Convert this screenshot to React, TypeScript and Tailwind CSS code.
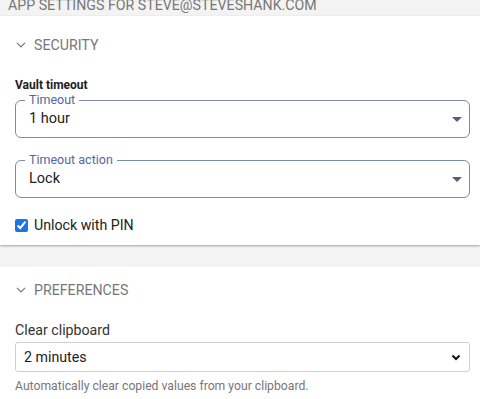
import React from "react";

function Chevron() {
  return (
    <svg width="10" height="6" viewBox="0 0 10 6" className="shrink-0">
      <path d="M1 0.8 L5 4.8 L9 0.8" fill="none" stroke="#777" strokeWidth="1.2" />
    </svg>
  );
}

function Caret() {
  return (
    <svg width="10" height="5" viewBox="0 0 10 5" className="shrink-0">
      <path d="M0 0 L10 0 L5 5 Z" fill="#55607f" />
    </svg>
  );
}

function OutlinedSelect({ label, value }: { label: string; value: string }) {
  return (
    <fieldset className="border border-[#7b89b0] rounded-[6px] pl-[9px] pr-[7px] pb-[8px]">
      <legend className="px-[4px] text-[12.5px] leading-[14px] text-[#5566a0]">{label}</legend>
      <div className="flex items-center justify-between pt-[2px] pl-[4px]">
        <span className="text-[14.5px] leading-[20px] text-[#212121]">{value}</span>
        <Caret />
      </div>
    </fieldset>
  );
}

export default function App() {
  return (
    <div className="w-[480px] h-[399px] overflow-hidden bg-[#f3f3f3] font-['Roboto',sans-serif]">
      <div className="h-[18px] pl-[8px] -mt-[2px] text-[14.2px] leading-[14px] text-[#777] uppercase whitespace-nowrap">
        App settings for steve@steveshank.com
      </div>
      <div className="bg-white shadow-[0_1px_2px_rgba(0,0,0,0.35)] pl-[15px] pr-[10px] pb-[10px]">
        <div className="flex items-center gap-[8px] pl-[1px] pt-[21px] pb-[23px]">
          <Chevron />
          <span className="text-[14.2px] leading-[16px] text-[#777] uppercase">Security</span>
        </div>
        <div className="text-[12px] leading-[14px] font-bold text-[#212121] pt-[2px]">Vault timeout</div>
        <div className="mt-[1px]">
          <OutlinedSelect label="Timeout" value="1 hour" />
        </div>
        <div className="mt-[15px]">
          <OutlinedSelect label="Timeout action" value="Lock" />
        </div>
        <label className="flex items-center gap-[6px] mt-[17px]">
          <input type="checkbox" defaultChecked className="w-[13px] h-[13px] accent-[#1a73e8] m-0" />
          <span className="text-[14.2px] leading-[20px] text-[#212121]">Unlock with PIN</span>
        </label>
      </div>
      <div className="mt-[22px] bg-white pl-[15px] pr-[10px] h-[200px]">
        <div className="flex items-center gap-[8px] pl-[1px] pt-[15px] pb-[16px]">
          <Chevron />
          <span className="text-[14.2px] leading-[16px] text-[#777] uppercase">Preferences</span>
        </div>
        <div className="text-[14.2px] leading-[18px] text-[#333] pt-[7px]">Clear clipboard</div>
        <div className="mt-[3px] h-[30px] border border-[#d0d0d0] rounded-[3px] flex items-center justify-between pl-[8px] pr-[8px]">
          <span className="text-[14.2px] leading-[20px] text-[#212121]">2 minutes</span>
          <svg width="10" height="7" viewBox="0 0 10 7">
            <path d="M1.5 1.5 L5 5 L8.5 1.5" fill="none" stroke="#111" strokeWidth="2" />
          </svg>
        </div>
        <div className="mt-[7px] text-[12.2px] leading-[14px] text-[#777]">
          Automatically clear copied values from your clipboard.
        </div>
      </div>
    </div>
  );
}
